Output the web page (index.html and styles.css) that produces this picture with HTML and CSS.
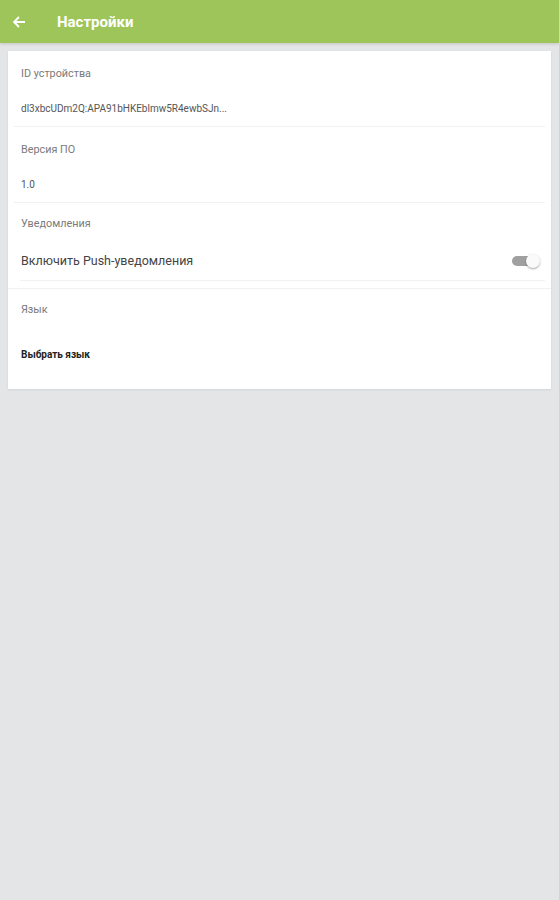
FILE: index.html
```html
<!DOCTYPE html>
<html lang="ru">
<head>
    <meta charset="UTF-8">
    <meta name="viewport" content="width=device-width, initial-scale=1.0">
    <title>Настройки</title>
    <link rel="stylesheet" href="styles.css">
</head>
<body>
    <header class="toolbar">
        <svg class="back" width="14" height="14" viewBox="0 0 14 14">
            <path d="M13 7H2M7 2L2 7l5 5" fill="none" stroke="#fff" stroke-width="1.8"/>
        </svg>
        <span class="toolbar-title">Настройки</span>
    </header>

    <div class="card">
        <div class="group">
            <div class="label">ID устройства</div>
            <div class="value">dl3xbcUDm2Q:APA91bHKEblmw5R4ewbSJn...</div>
        </div>
        <div class="divider"></div>
        <div class="group">
            <div class="label">Версия ПО</div>
            <div class="value">1.0</div>
        </div>
        <div class="divider"></div>
        <div class="group">
            <div class="label tight">Уведомления</div>
            <div class="switch-row">
                <span class="switch-text">Включить Push-уведомления</span>
                <span class="switch"><span class="thumb"></span></span>
            </div>
        </div>
        <div class="divider inset"></div>
        <div class="divider full"></div>
        <div class="group">
            <div class="label tight">Язык</div>
            <div class="action">Выбрать язык</div>
        </div>
    </div>
</body>
</html>
```

FILE: styles.css
```css
body {
    margin: 0;
    font-family: Roboto, "Noto Sans", sans-serif;
    background: #e3e5e6;
    min-height: 900px;
}
.toolbar {
    height: 43px;
    background: #9dc55a;
    display: flex;
    align-items: center;
    padding-left: 12px;
    box-shadow: 0 1px 3px rgba(0,0,0,0.15);
}
.back {
    margin-right: 31px;
}
.toolbar-title {
    color: #fff;
    font-size: 15px;
    font-weight: bold;
}
.card {
    margin: 8px 8px 0;
    background: #fff;
    padding-bottom: 28px;
    box-shadow: 0 1px 2px rgba(0,0,0,0.08);
}
.group {
    padding: 0 13px;
}
.label {
    padding-top: 17px;
    font-size: 10.8px;
    color: #7a7a7a;
    line-height: 12px;
}
.label.tight {
    padding-top: 15px;
}
.value {
    padding-top: 23px;
    padding-bottom: 12px;
    font-size: 10px;
    color: #555;
    line-height: 11px;
}
.divider {
    height: 1px;
    background: #f1f1f1;
    margin: 0 6px;
}
.divider.inset {
    margin: 0 6px 0 12px;
}
.divider.full {
    margin: 7px 0 0;
}
.switch-row {
    display: flex;
    align-items: center;
    justify-content: space-between;
    padding-top: 24px;
    padding-bottom: 12px;
}
.switch-text {
    font-size: 12.5px;
    color: #444;
    line-height: 14px;
}
.switch {
    position: relative;
    width: 24px;
    height: 10px;
    border-radius: 5px;
    background: #a0a0a0;
    margin-right: 2px;
}
.thumb {
    position: absolute;
    right: -4px;
    top: -2px;
    width: 14px;
    height: 14px;
    border-radius: 50%;
    background: #fafafa;
    box-shadow: 0 1px 2px rgba(0,0,0,0.35);
}
.action {
    padding-top: 33px;
    font-size: 10px;
    font-weight: bold;
    color: #222;
    line-height: 12px;
}
```
